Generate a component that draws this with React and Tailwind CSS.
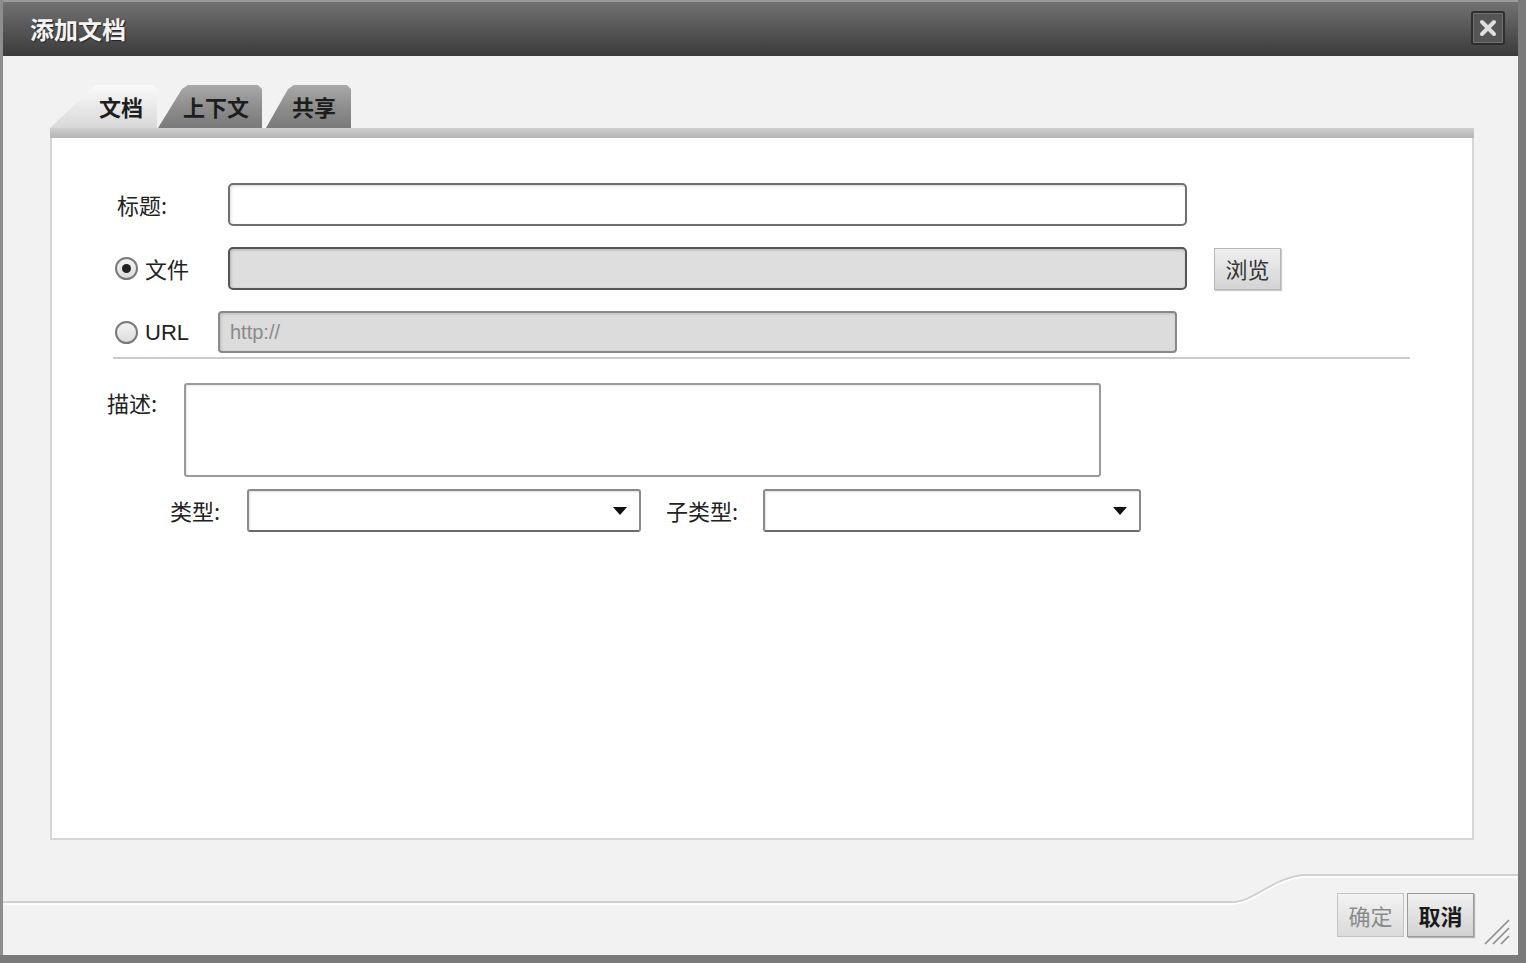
import React from "react";

const font = "font-['Noto_Sans_CJK_SC','Noto_Sans',sans-serif]";

function Radio({ checked }) {
  return (
    <span className="w-[23px] h-[23px] rounded-full border-2 border-[#7a7a7a] bg-gradient-to-b from-[#f4f4f4] to-[#dcdcdc] flex items-center justify-center shrink-0">
      {checked && <span className="w-[9px] h-[9px] rounded-full bg-[#222]" />}
    </span>
  );
}

function Select({ width }) {
  return (
    <div className={`${width} h-[43px] bg-white border-2 border-[#8a8a8a] border-b-[#6a6a6a] rounded-[3px] shadow-[inset_1px_1px_2px_rgba(0,0,0,0.12)] flex items-center justify-end pr-[11px]`}>
      <svg width="16" height="10" viewBox="0 0 16 10"><path d="M1 1h14L8 9z" fill="#111" /></svg>
    </div>
  );
}

const Tab = ({ label, active, w, slant, textPad }) => (
  <div
    className={`h-[43px] flex items-center font-bold text-[22px] text-[#1d1d1d] ${active ? "bg-gradient-to-b from-[#fafafa] to-[#d8d8d8]" : "bg-gradient-to-b from-[#a9a9a9] via-[#8e8e8e] to-[#7a7a7a]"} ${w} ${slant} ${textPad}`}
  >
    {label}
  </div>
);

export default function App() {
  return (
    <div className={`w-[1526px] h-[963px] bg-[#7a7a7a] ${font}`}>
      <div className="w-[1518px] h-[955px] flex flex-col bg-[#f2f2f2] border-l-[3px] border-[#8e8e8e]">
        {/* title bar */}
        <div className="h-[56px] shrink-0 bg-gradient-to-b from-[#727272] to-[#3b3b3b] border-t-2 border-[#9a9a9a] flex items-center justify-between pl-[27px] pr-[13px]">
          <span className="text-[#f4f4f4] font-bold text-[24px] [text-shadow:1px_1px_1px_#222]">添加文档</span>
          <button className="w-[34px] h-[34px] rounded-[3px] bg-[#555] border-2 border-[#2e2e2e] shadow-[inset_0_0_0_1px_#707070] flex items-center justify-center mt-[-3px]">
            <svg width="20" height="20" viewBox="0 0 20 20"><path d="M4 4l12 12M16 4L4 16" stroke="#dedede" strokeWidth="4" strokeLinecap="round" /></svg>
          </button>
        </div>

        {/* tabs */}
        <div className="flex items-end gap-[1px] mt-[29px] ml-[47px] h-[43px]">
          <Tab label="文档" active w="w-[107px]" slant="[clip-path:polygon(0_100%,41px_4px,46px_0,calc(100%_-_4px)_0,100%_4px,100%_100%)]" textPad="pl-[49px]" />
          <Tab label="上下文" w="w-[104px]" slant="[clip-path:polygon(0_100%,24px_4px,30px_0,calc(100%_-_4px)_0,100%_4px,100%_100%)]" textPad="pl-[25px]" />
          <div className="w-[2px]" />
          <Tab label="共享" w="w-[85px]" slant="[clip-path:polygon(0_100%,22px_4px,28px_0,calc(100%_-_4px)_0,100%_4px,100%_100%)]" textPad="pl-[26px]" />
        </div>
        <div className="ml-[47px] w-[1424px] h-[10px] bg-gradient-to-b from-[#cfcfcf] to-[#b4b4b4]" />

        {/* panel */}
        <div className="ml-[47px] w-[1424px] h-[702px] bg-white border-x-2 border-b-2 border-[#d6d6d6] flex flex-col text-[#222] text-[22px]">
          <div className="flex items-center mt-[45px] ml-[65px] h-[43px]">
            <span className="w-[111px]">标题:</span>
            <div className="w-[959px] h-[43px] bg-white border-2 border-[#6f6f6f] rounded-[5px] shadow-[inset_1px_1px_3px_rgba(0,0,0,0.15)]" />
          </div>

          <div className="flex items-center mt-[21px] ml-[63px] h-[43px]">
            <div className="w-[113px] flex items-center gap-[7px]">
              <Radio checked />
              <span>文件</span>
            </div>
            <div className="w-[959px] h-[43px] bg-[#dedede] border-2 border-[#555] rounded-[5px] shadow-[inset_1px_1px_3px_rgba(0,0,0,0.2)]" />
            <button className="ml-[27px] w-[67px] h-[42px] bg-gradient-to-b from-[#efefef] to-[#d4d4d4] border border-[#b5b5b5] shadow-[1px_1px_1px_rgba(0,0,0,0.2)] text-[22px] text-[#333]">浏览</button>
          </div>

          <div className="flex items-center mt-[21px] ml-[63px] h-[42px]">
            <div className="w-[103px] flex items-center gap-[7px]">
              <Radio />
              <span className="font-['Liberation_Sans',sans-serif] text-[22px]">URL</span>
            </div>
            <div className="w-[959px] h-[42px] bg-[#dcdcdc] border-2 border-[#888] rounded-[4px] shadow-[inset_1px_1px_3px_rgba(0,0,0,0.15)] flex items-center pl-[10px] font-['Liberation_Sans',sans-serif] text-[20px] text-[#8a8a8a]">http://</div>
          </div>

          <div className="mt-[4px] ml-[61px] w-[1297px] h-[2px] bg-[#cbcbcb]" />

          <div className="flex items-start mt-[24px] ml-[55px]">
            <span className="w-[77px] pt-[3px]">描述:</span>
            <div className="w-[917px] h-[94px] bg-white border-2 border-[#9a9a9a] rounded-[3px] shadow-[inset_1px_1px_2px_rgba(0,0,0,0.1)]" />
          </div>

          <div className="flex items-center mt-[12px] ml-[118px] h-[43px]">
            <span className="w-[77px]">类型:</span>
            <Select width="w-[394px]" />
            <span className="ml-[25px] w-[97px]">子类型:</span>
            <Select width="w-[378px]" />
          </div>
        </div>

        {/* footer */}
        <div className="relative flex-1 flex justify-end items-start pt-[53px] pr-[44px]">
          <svg className="absolute inset-0" width="1515" height="115" viewBox="0 0 1515 115">
            <path d="M0 62H1230C1250 62 1270 38 1300 35H1515" fill="none" stroke="#d0d0d0" strokeWidth="2" />
            <path d="M0 64H1230C1250 64 1270 40 1300 37H1515" fill="none" stroke="#ffffff" strokeWidth="1.5" />
          </svg>
          <button className="relative w-[67px] h-[44px] bg-gradient-to-b from-[#f3f3f3] to-[#dadada] border border-[#c4c4c4] text-[22px] text-[#8a8a8a]">确定</button>
          <button className="relative ml-[3px] w-[67px] h-[44px] bg-gradient-to-b from-[#f0f0f0] to-[#d2d2d2] border border-[#9a9a9a] shadow-[1px_1px_1px_rgba(0,0,0,0.25)] text-[22px] font-bold text-[#1a1a1a]">取消</button>
          <svg className="absolute right-[7px] bottom-[9px]" width="28" height="28" viewBox="0 0 28 28">
            <path d="M2 26L26 2M10 26L26 10M18 26L26 18" stroke="#8a8a8a" strokeWidth="1.6" />
          </svg>
        </div>
      </div>
    </div>
  );
}
